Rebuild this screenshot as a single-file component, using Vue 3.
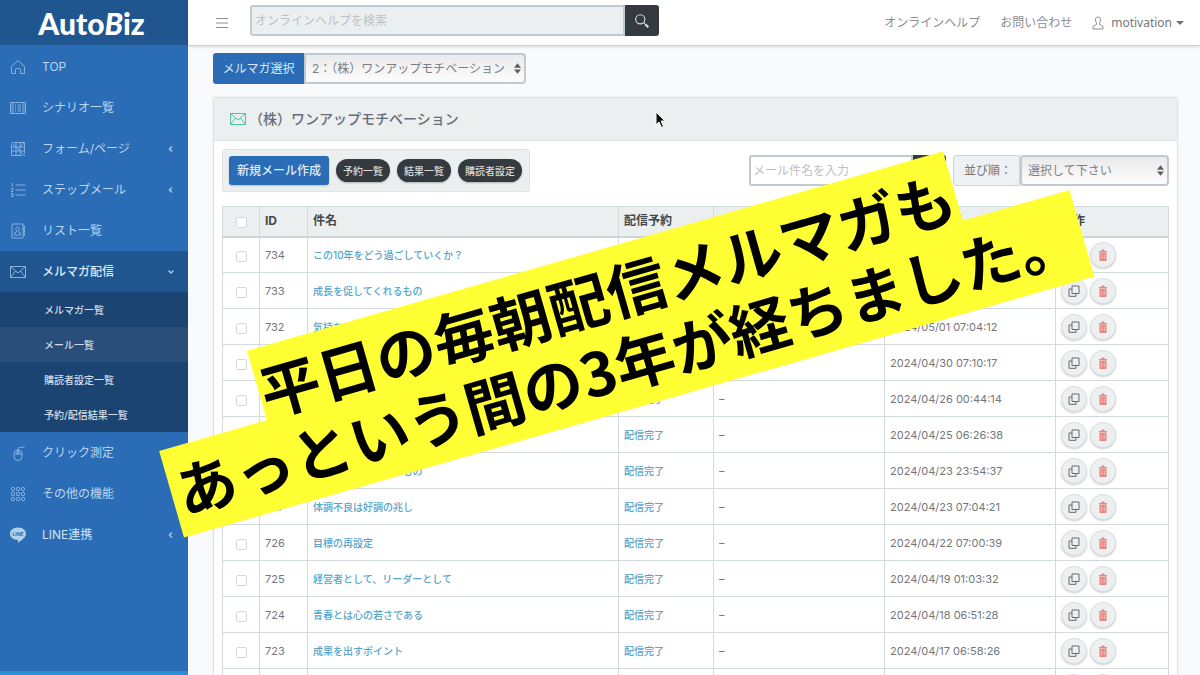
<script setup>
import { ref } from 'vue'

const menuTop = [
  { label: 'TOP', icon: 'home' },
  { label: 'シナリオ一覧', icon: 'table' },
  { label: 'フォーム/ページ', icon: 'form', more: true },
  { label: 'ステップメール', icon: 'steps', more: true },
  { label: 'リスト一覧', icon: 'book' },
]
const submenu = ['メルマガ一覧', 'メール一覧', '購読者設定一覧', '予約/配信結果一覧']
const menuBottom = [
  { label: 'クリック測定', icon: 'mouse' },
  { label: 'その他の機能', icon: 'dots' },
  { label: 'LINE連携', icon: 'line', more: true, strong: true },
]
const done = '配信完了'
const mails = [
  { id: '734', title: 'この10年をどう過ごしていくか？', state: done, date: '2024/05/07 07:02:24' },
  { id: '733', title: '成長を促してくれるもの', state: done, date: '2024/05/02 07:01:36' },
  { id: '732', title: '気持ち', state: done, date: '2024/05/01 07:04:12' },
  { id: '731', title: '', state: done, date: '2024/04/30 07:10:17' },
  { id: '730', title: '', state: done, date: '2024/04/26 00:44:14' },
  { id: '729', title: '', state: done, date: '2024/04/25 06:26:38' },
  { id: '728', title: '成長を促してくれるもの', state: done, date: '2024/04/23 23:54:37' },
  { id: '727', title: '体調不良は好調の兆し', state: done, date: '2024/04/23 07:04:21' },
  { id: '726', title: '目標の再設定', state: done, date: '2024/04/22 07:00:39' },
  { id: '725', title: '経営者として、リーダーとして', state: done, date: '2024/04/19 01:03:32' },
  { id: '724', title: '青春とは心の若さである', state: done, date: '2024/04/18 06:51:28' },
  { id: '723', title: '成果を出すポイント', state: done, date: '2024/04/17 06:58:26' },
  { id: '', title: '', state: '', date: '' },
]
const help = ref('')
const subject = ref('')
</script>

<template>
  <div class="app">
    <aside class="side">
      <a href="#" class="logo" aria-label="AutoBiz">Auto<i>B</i>iz</a>
      <nav class="menu">
        <a v-for="m in menuTop" :key="m.label" href="#" class="item">
          <svg class="ico" viewBox="0 0 16 16">
            <path v-if="m.icon === 'home'" d="M1.500 7.500L8 1.500l6.500 6v7H10.500v-4a1 1 0 0 0-1-1h-3a1 1 0 0 0-1 1v4h-4z" />
            <path v-else-if="m.icon === 'table'" d="M.5 2.500h15v11H.5zM3 2.500v11M13 2.500v11M5 5h1M7.500 5H11M5 7h1M7.500 7H11M5 9h1M7.500 9H11M5 11h1M7.500 11H11M1 5h1M1 8h1M1 11h1M14 5h1M14 8h1M14 11h1" />
            <path v-else-if="m.icon === 'form'" d="M3.500 1.500h11v11M1.500 3.500v11h11M1.500 6h13M1.500 10h13M6 1.500v13M10 1.500v13M1 1l14 14M10 6l4-4" />
            <path v-else-if="m.icon === 'steps'" d="M5.500 3h10M5.500 8h10M5.500 13h10M1.500 1.500h1v3M1 6.500h2v1.500l-2 1.500h2M1 11.500h2v3H1M1.500 13H3" />
            <g v-else>
              <path d="M2 1h11v14H2zM13 3h1.500v2.500H13M13 6.500h1.500V9H13M13 10h1.500v2.500H13" />
              <path d="M7.500 4c2 0 2 2.500 1 4v1l2 1v2h-6v-2l2-1V8c-1-1.500-1-4 1-4z" />
            </g>
          </svg>
          <span class="label">{{ m.label }}</span>
          <svg v-if="m.more" class="chev" viewBox="0 0 8 8"><path d="M5 1.500L2.500 4 5 6.500" /></svg>
        </a>
        <a href="#" class="item open">
          <svg class="ico" viewBox="0 0 16 16"><path d="M.5 2.500h15v11H.5zM.5 2.500L8 9l7.500-6.500M.5 13.500L5.500 7M15.500 13.500L10.500 7" /></svg>
          <span class="label">メルマガ配信</span>
          <svg class="chev" viewBox="0 0 8 8"><path d="M1.500 2.500L4 5l2.500-2.500" /></svg>
        </a>
        <div class="sub">
          <a v-for="(s, i) in submenu" :key="s" href="#" :class="{ on: i === 1 }">{{ s }}</a>
        </div>
        <a v-for="m in menuBottom" :key="m.label" href="#" class="item" :class="{ strong: m.strong }">
          <svg class="ico" viewBox="0 0 16 16">
            <path v-if="m.icon === 'mouse'" d="M4 8.500a4 3.500 0 0 1 8 0v3a4 4 0 0 1-8 0zM4 9h8M8 9V4.500c0-2 1-2 3-2s3 0 3.500-2M7 6.500h2v2H7z" />
            <g v-else-if="m.icon === 'dots'">
              <template v-for="y in 3" :key="y">
                <circle v-for="x in 3" :key="x" :cx="x * 5 - 2" :cy="y * 5 - 2" r="1.700" />
              </template>
            </g>
            <g v-else class="talk">
              <path d="M8 .5c4.500 0 8 2.800 8 6.300 0 3.500-4 6.300-8 9.200v-3C3.500 13 0 10.300 0 6.800S3.500.5 8 .5z" />
              <text x="8" y="8.500" text-anchor="middle">LINE</text>
            </g>
          </svg>
          <span class="label">{{ m.label }}</span>
          <svg v-if="m.more" class="chev" viewBox="0 0 8 8"><path d="M5 1.500L2.500 4 5 6.500" /></svg>
        </a>
      </nav>
      <div class="strip"></div>
    </aside>

    <div class="page">
      <header class="top">
        <button class="burger" aria-label="メニュー"><svg viewBox="0 0 12 12"><path d="M0 1.500h12M0 6h12M0 10.500h12" /></svg></button>
        <form class="search" @submit.prevent>
          <input v-model="help" type="text" placeholder="オンラインヘルプを検索" aria-label="オンラインヘルプを検索" />
          <button aria-label="検索"><svg viewBox="0 0 14 14"><circle cx="5.500" cy="5.500" r="4" /><path d="M8.500 8.500l1 1" /><path class="grip" d="M9.800 9.800l2.700 2.700" /></svg></button>
        </form>
        <nav class="links">
          <a href="#">オンラインヘルプ</a>
          <a href="#">お問い合わせ</a>
          <button class="user">
            <svg viewBox="0 0 12 14"><path d="M6 1c3 0 3 3.500 1.500 6v1.500l3.500 2v2.500H1v-2.500l3.500-2V7C3 4.500 3 1 6 1z" /></svg>
            <span>motivation</span>
            <i class="caret"></i>
          </button>
        </nav>
      </header>

      <main class="main">
        <div class="group">
          <label class="pick" for="magazine">メルマガ選択</label>
          <div class="sel">
            <select id="magazine"><option>2：（株）ワンアップモチベーション</option></select>
            <svg viewBox="0 0 8 12"><path d="M4 0l4 5H0zM4 12l4-5H0z" /></svg>
          </div>
        </div>

        <section class="card">
          <h1>
            <svg viewBox="0 0 16 16"><path d="M.5 2.500h15v11H.5zM.5 2.500L8 9l7.500-6.500M.5 13.500L5.500 7M15.500 13.500L10.500 7" /></svg>
            （株）ワンアップモチベーション
          </h1>
          <div class="body">
            <div class="tools">
              <div class="actions">
                <button class="new">新規メール作成</button>
                <button class="pill">予約一覧</button>
                <button class="pill">結果一覧</button>
                <button class="pill">購読者設定</button>
              </div>
              <div class="filters">
                <form class="find" @submit.prevent>
                  <input v-model="subject" type="text" placeholder="メール件名を入力" aria-label="メール件名を入力" />
                  <button aria-label="検索"></button>
                </form>
                <div class="group">
                  <label class="order" for="order">並び順：</label>
                  <div class="sel wide">
                    <select id="order"><option>選択して下さい</option></select>
                    <svg viewBox="0 0 8 12"><path d="M4 0l4 5H0zM4 12l4-5H0z" /></svg>
                  </div>
                </div>
              </div>
            </div>

            <table>
              <colgroup>
                <col class="c-check" /><col class="c-id" /><col /><col class="c-state" /><col class="c-wide" /><col class="c-wide" /><col class="c-ops" />
              </colgroup>
              <thead>
                <tr>
                  <th><input type="checkbox" aria-label="すべて選択" /></th>
                  <th>ID</th><th>件名</th><th>配信予約</th><th></th><th>配信完了日時</th><th>操作</th>
                </tr>
              </thead>
              <tbody>
                <tr v-for="(m, i) in mails" :key="i">
                  <td><input type="checkbox" :aria-label="m.id" /></td>
                  <td>{{ m.id }}</td>
                  <td><a v-if="m.title" href="#">{{ m.title }}</a></td>
                  <td><a v-if="m.state" href="#">{{ m.state }}</a></td>
                  <td>{{ m.state ? '–' : '' }}</td>
                  <td>{{ m.date }}</td>
                  <td>
                    <div class="ops">
                      <button aria-label="複製"><svg viewBox="0 0 12 12"><path d="M4 1h7v7.500H4zM4 4H1v7.300h7V8.500" /></svg></button>
                      <button class="del" aria-label="削除">
                        <svg viewBox="0 0 12 12"><path class="bin" d="M2.500 4h7v8h-7zM2 2h2.500V.5h3V2H10v1.500H2z" /><path d="M4.700 5.500V10M7.300 5.500V10" /></svg>
                      </button>
                    </div>
                  </td>
                </tr>
              </tbody>
            </table>
          </div>
        </section>
      </main>
    </div>

    <div class="banner">
      <p><span>平日の毎朝配信メルマガも</span></p>
      <p><span>あっという間の3年が経ちました。</span></p>
    </div>

    <svg class="pointer" viewBox="0 0 12 18"><path d="M1 1v13l3-3 2.500 5.500 2-1L6.200 10H10z" /></svg>
  </div>
</template>

<style>
html, body { background: #f8fafc; overflow: hidden; }
</style>

<style scoped>
* { box-sizing: border-box; }
.app {
  position: relative;
  display: flex;
  height: 100vh;
  overflow: hidden;
  font-family: Inter, "Noto Sans CJK JP", sans-serif;
  font-size: 12px;
  line-height: 18px;
  color: #73777b;
}
a { text-decoration: none; color: inherit; }
button, input, select { font: inherit; color: inherit; margin: 0; padding: 0; border: 0; background: none; }
svg { fill: none; stroke: currentColor; display: block; flex: none; }

.side { width: 188px; flex: none; display: flex; flex-direction: column; background: #2a6db6; color: #bdd5ee; }
.logo {
  height: 45px; flex: none; display: flex; align-items: center; justify-content: center;
  background: #20568f; color: #fff; font: 900 30px/44px Lato, sans-serif; padding-right: 5px;
}
.menu { flex: 1; padding-top: 1px; }
.item { display: flex; align-items: center; height: 41px; padding: 0 13px 0 10px; }
.ico { width: 16px; height: 16px; margin-right: 16px; color: #85b1df; stroke-width: 1; }
.label { flex: 1; }
.chev { width: 8px; height: 8px; color: #a4c5e8; stroke-width: 1.5; }
.open { background: #20568f; color: #dce8f4; font-weight: 500; }
.strong { color: #d3e3f4; }
.talk path { fill: #b3cfeb; stroke: none; }
.talk text { font: 700 5px Inter, sans-serif; fill: #2a6db6; stroke: none; }
.sub { background: #1c4472; color: #d4dde7; font-size: 10px; font-weight: 500; }
.sub a { display: flex; align-items: center; height: 35px; padding-left: 44px; }
.sub .on { background: #294e7a; }
.strip { height: 4px; background: #2a8fd5; }

.page { flex: 1; min-width: 0; display: flex; flex-direction: column; }
.top {
  height: 46px; flex: none; display: flex; align-items: center; padding: 0 16px 4px 28px;
  background: #fff; border-bottom: 1px solid #cfd2d5; box-shadow: 0 1px 3px #0002; color: #8b8f93;
}
.burger { margin-right: 22px; padding-top: 4px; }
.burger svg { width: 12px; height: 12px; stroke-width: 1; }
.search { display: flex; height: 31px; flex: 0 1 409px; }
.search input { flex: 1; min-width: 0; padding: 0 3px; background: #ebeff0; border: 2px solid #bfcbd1; border-radius: 3px 0 0 3px; }
input::placeholder { color: #bcc1c5; opacity: 1; }
.search button { width: 34px; display: grid; place-items: center; background: #343a40; color: #d8dadc; border-radius: 0 3px 3px 0; }
.search svg { width: 16px; height: 16px; stroke-width: 1; }
.grip { stroke-width: 2; }
.links { margin-left: auto; display: flex; align-items: center; gap: 20px; padding-top: 4px; }
.user { display: flex; align-items: center; }
.user svg { width: 12px; height: 14px; margin-right: 7px; }
.user span { font-family: "Noto Sans", sans-serif; color: #74787c; }
.caret { border: 4px solid transparent; border-top: 4px solid #6c7074; border-bottom: 0; margin-left: 4px; }

.main { padding: 7px 22px 0 25px; }
.group { display: flex; height: 31px; }
.pick { background: #2a6db6; color: #dbe8f5; padding: 7px 0; border-radius: 3px 0 0 3px; width: 91px; text-align: center; white-space: nowrap; }
.sel { position: relative; width: 222px; }
.sel select {
  width: 100%; height: 100%; appearance: none; padding: 0 6px; color: #7b7f83;
  border: 2px solid #bfc9cf; border-radius: 0 4px 4px 0;
  background: linear-gradient(#eaeaec, #fdfdfd);
}
.sel svg { position: absolute; right: 5px; top: 10px; width: 7px; height: 11px; fill: #5b5f63; stroke: none; pointer-events: none; }
.sel.wide { width: 149px; }
.wide select { border-radius: 4px; }

.card { margin-top: 13px; border: 1px solid #dde2e5; border-radius: 3px; background: #fff; box-shadow: 0 0 3px #0001; }
h1 {
  margin: 0; height: 43px; display: flex; align-items: center; padding-left: 16px;
  font-size: 14px; font-weight: 500; color: #686c78; background: #ebeff0; border-bottom: 1px solid #dce1e3;
}
h1 svg { width: 16px; height: 16px; margin-right: 3px; color: #4cc7a2; }
.body { padding: 8px; }
.tools { display: flex; justify-content: space-between; margin-bottom: 14px; }
.actions { display: flex; align-items: center; gap: 7px; height: 43px; padding: 0 7px 0 6px; background: #ebeff0; border: 1px solid #dfe4e6; border-radius: 3px; }
.new { height: 29px; padding: 0 8px; background: #2a6db6; color: #dfeaf6; border-radius: 3px; font-weight: 500; box-shadow: 0 1px 2px #0003; }
.pill { height: 23px; padding: 0 7px; background: #343a40; color: #d8dadc; border-radius: 12px; font-size: 10px; font-weight: 500; box-shadow: 0 1px 2px #0004; }
.filters { display: flex; gap: 7px; padding-top: 6px; }
.find { display: flex; height: 31px; width: 197px; }
.find input { flex: 1; min-width: 0; padding: 0 2px; border: 2px solid #bfcbd1; border-radius: 3px 0 0 3px; background: #fff; }
.find button { width: 33px; background: #343a40; border-radius: 0 3px 3px 0; }
.order { width: 67px; padding: 6px 10px; background: #edf1f3; border: 1px solid #ccd5da; border-radius: 3px 0 0 3px; white-space: nowrap; }

table { width: 100%; table-layout: fixed; border-collapse: collapse; font-size: 11px; }
.c-check { width: 37px; }
.c-id { width: 48px; }
.c-state { width: 95px; }
.c-wide { width: 171px; }
.c-ops { width: 113px; }
th, td { border: 1px solid #d3dadd; padding: 0 5px; text-align: left; height: 36px; white-space: nowrap; }
th { height: 30px; font-size: 12px; font-weight: 700; color: #43474c; background: #ebeff0; border-bottom: 2px solid #cbd4d7; }
td a { font-size: 10px; font-weight: 500; color: #56a5ca; }
th:first-child, td:first-child { text-align: center; padding-top: 2px; }
table input { appearance: none; width: 11px; height: 11px; border: 1px solid #d6d9db; border-radius: 2px; background: #fff; vertical-align: middle; }
.ops { display: flex; gap: 3px; }
.ops button { width: 26px; height: 26px; display: grid; place-items: center; border-radius: 50%; background: #edf0f1; border: 1px solid #dcdfe1; box-shadow: 0 1px 2px #0003; }
.ops svg { width: 12px; height: 12px; stroke: #676b6f; }
.ops .del svg { stroke: #f6c4c0; }
.ops .bin { fill: #eb8680; stroke: none; }

.banner {
  position: absolute; left: 617px; top: 329px; transform: translate(-50%, -50%) rotate(-16deg);
  display: flex; flex-direction: column; align-items: center;
  font: 700 60px/86px "Noto Sans CJK JP", sans-serif; color: #000; white-space: nowrap;
}
.banner p { margin: 0; padding: 0 2px 4px; background: #ffff33; }
.banner p + p { margin-top: -18px; padding: 0 6px 4px; }
.banner span { position: relative; z-index: 1; }
.pointer { position: absolute; left: 655px; top: 111px; width: 12px; height: 18px; fill: #111; stroke: #fff; stroke-width: 1; }
</style>
